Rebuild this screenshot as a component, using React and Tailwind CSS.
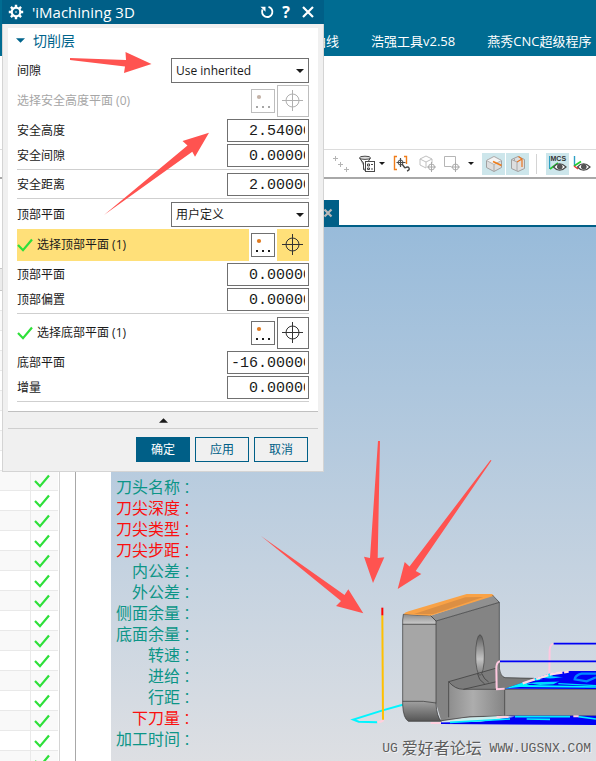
const rows = Array.from({ length: 24 }, (_, i) => i);

const readouts = [
  { label: "刀头名称" },
  { label: "刀尖深度", alert: true },
  { label: "刀尖类型", alert: true },
  { label: "刀尖步距", alert: true },
  { label: "内公差" },
  { label: "外公差" },
  { label: "侧面余量" },
  { label: "底面余量" },
  { label: "转速" },
  { label: "进给" },
  { label: "行距" },
  { label: "下刀量", alert: true },
  { label: "加工时间" },
];

const CheckMark = () => (
  <svg viewBox="0 0 16 14" className="w-4 h-3.5 shrink-0" fill="none" stroke="#2ee03a" strokeWidth="2.2">
    <path d="M1 7 L6 12.2 L15 1.5" />
  </svg>
);

const Caret = ({ className }) => (
  <svg viewBox="0 0 8 4" className={className} fill="currentColor">
    <path d="M0 0 H8 L4 4 Z" />
  </svg>
);

const Separator = () => <hr className="border-0 h-px mb-px bg-[#cfcfcf]" />;

const SelectRow = ({ id, label, options }) => (
  <div className="flex items-center justify-between h-[25px]">
    <label htmlFor={id}>{label}</label>
    <div className="relative w-[138px] h-full">
      <select id={id} className="appearance-none w-full h-full pl-1 pr-5 border border-[#707070] bg-white">
        {options.map((option) => (
          <option key={option}>{option}</option>
        ))}
      </select>
      <Caret className="absolute right-[5px] top-[11px] w-2 h-1 pointer-events-none" />
    </div>
  </div>
);

// The field is narrower than its nine characters, so the last digit is cut off
const NumberRow = ({ id, label, value }) => (
  <div className="flex items-center justify-between h-[23px]">
    <label htmlFor={id}>{label}</label>
    <input
      id={id}
      type="text"
      defaultValue={value.padStart(9)}
      className="w-[82px] h-full pt-px pl-[3px] pr-[3px] border border-[#707070] bg-white font-['Liberation_Mono',monospace] text-[15px]"
    />
  </div>
);

const PlaneRow = ({ label, active, disabled, checked }) => (
  <div className={`flex items-center h-8 ${disabled ? "text-[#a6a6a6]" : ""}`}>
    <div className={`flex items-center gap-1 flex-1 h-full ${active ? "bg-[#ffe079]" : ""}`}>
      {checked && <CheckMark />}
      <span>{label}</span>
    </div>
    <button
      aria-label="点对话框"
      disabled={disabled}
      className={`ml-[2px] mr-[2px] w-6 h-6 border bg-white ${disabled ? "border-[#bdbdbd]" : "border-[#707070]"}`}
    >
      <svg viewBox="0 0 22 22" className="w-full h-full" fill="currentColor">
        <circle cx="7" cy="7" r="2.1" fill={disabled ? "#c4b3a8" : "#e07a1f"} />
        <path d="M4 16h2v2H4zM10 16h2v2h-2zM16 16h2v2h-2z" />
      </svg>
    </button>
    <button
      aria-label="指定平面"
      disabled={disabled}
      className={`w-8 h-8 border ${
        active ? "bg-[#ffe079] border-[#ffe079]" : disabled ? "bg-white border-[#bdbdbd]" : "bg-white border-[#707070]"
      }`}
    >
      <svg viewBox="0 0 30 30" className="w-full h-full" fill="none" stroke={disabled ? "#b0b0b0" : "#333"}>
        <circle cx="14.5" cy="14.5" r="6.5" />
        <path d="M14.5 4 V25 M4 14.5 H25" />
      </svg>
    </button>
  </div>
);

const Dialog = () => (
  <section className="absolute left-[2px] top-0 w-[322px] border border-t-0 border-[#d4d4d4] bg-[#f0f0f0] text-[12px] text-[#1a1a1a]">
    <header className="flex items-center h-6 pl-[6px] pr-[10px] -mx-px bg-[#005f87] text-white">
      <svg viewBox="0 0 16 16" className="w-4 h-4 mr-2" fill="none" stroke="currentColor">
        <circle cx="8" cy="8" r="4.3" strokeWidth="2.2" />
        <path
          d="M8 .8v2.4M8 12.8v2.4M.8 8h2.4M12.8 8h2.4M2.9 2.9l1.7 1.7M11.4 11.4l1.7 1.7M2.9 13.1l1.7-1.7M11.4 4.6l1.7-1.7"
          strokeWidth="2.4"
        />
        <circle cx="8" cy="8" r=".8" fill="currentColor" stroke="none" />
      </svg>
      <h1 className="flex-1 text-[15px]">'iMachining 3D</h1>
      <button aria-label="重置" className="mr-[8px]">
        <svg viewBox="0 0 14 14" className="w-3.5 h-3.5" fill="none" stroke="currentColor" strokeWidth="1.9">
          <path d="M8.5 1.8 A5.2 5.2 0 1 1 2.6 4.5" />
          <path d="M.5 1.8 H5.5 V6.8 Z" fill="currentColor" stroke="none" />
        </svg>
      </button>
      <button className="mr-3 text-[16px] font-bold">?</button>
      <button aria-label="关闭">
        <svg viewBox="0 0 12 12" className="w-3 h-3" stroke="currentColor" strokeWidth="2.2">
          <path d="M1 1 L11 11 M11 1 L1 11" />
        </svg>
      </button>
    </header>

    <div className="mx-[5px] mt-1 pl-[9px] pr-[9px] pb-2 flex flex-col gap-[2px] bg-white border-b border-[#c0c0c0]">
      <button className="flex items-center gap-2 h-7 pb-1 -ml-px text-[14px] text-[#00648c]">
        <Caret className="w-[9px] h-[5px]" />
        切削层
      </button>
      <SelectRow id="clearance" label="间隙" options={["Use inherited"]} />
      <PlaneRow label="选择安全高度平面 (0)" disabled />
      <NumberRow id="safe-height" label="安全高度" value="2.54000" />
      <NumberRow id="safe-gap" label="安全间隙" value="0.00000" />
      <Separator />
      <NumberRow id="safe-distance" label="安全距离" value="2.00000" />
      <Separator />
      <SelectRow id="top-mode" label="顶部平面" options={["用户定义"]} />
      <PlaneRow label="选择顶部平面 (1)" active checked />
      <NumberRow id="top-plane" label="顶部平面" value="0.00000" />
      <NumberRow id="top-offset" label="顶部偏置" value="0.00000" />
      <Separator />
      <PlaneRow label="选择底部平面 (1)" checked />
      <NumberRow id="bottom-plane" label="底部平面" value="-16.00000" />
      <NumberRow id="increment" label="增量" value="0.00000" />
      <Separator />
    </div>

    <div className="mx-[5px] flex h-[17px] items-center justify-center border-b border-[#cfcfcf]">
      <button aria-label="折叠">
        <Caret className="w-[9px] h-[5px] rotate-180" />
      </button>
    </div>
    <footer className="flex justify-end gap-[5px] pt-2 pb-[9px] pr-[15px]">
      <button className="w-[54px] h-[25px] border border-[#005f87] bg-[#005f87] text-white">确定</button>
      <button className="w-[54px] h-[25px] border border-[#005f87] text-[#005f87]">应用</button>
      <button className="w-[54px] h-[25px] border border-[#005f87] text-[#005f87]">取消</button>
    </footer>
  </section>
);

const ToolButton = ({ label, lit, children }) => (
  <button
    aria-label={label}
    className={`flex items-center justify-center h-[22px] shrink-0 ${lit ? "w-[23px] bg-[#cde6eb]" : "w-[18px]"}`}
  >
    <svg viewBox="0 0 18 18" className="w-[18px] h-[18px] shrink-0" fill="none" stroke="#4a4a4a">
      {children}
    </svg>
  </button>
);

const Toolbar = () => (
  <div className="flex items-center h-[30px] pl-[332px] border-t border-b-2 border-t-[#dcdcdc] border-b-[#a8a8a8] text-[#1a1a1a]">
    <ToolButton label="点集">
      <path d="M1 3.5h5M3.5 1v5M6 9.5h5M8.5 7v5M12 14.5h5M14.5 12v5" stroke="#b5b5b5" />
    </ToolButton>
    <div className="flex items-center gap-[3px] ml-2">
      <ToolButton label="过滤器">
        <ellipse cx="7" cy="2.8" rx="5.5" ry="1.6" fill="#ddd" />
        <path d="M1.5 3 L5.5 8 V14.5 L7.5 15.5" fill="#999" />
        <path d="M12.5 3 L10.5 6" />
        <rect x="7.5" y="6.5" width="9" height="10" fill="#fff" />
        <path d="M9.5 9h2v2h-2zM13 9.5h2M9.5 13h2v1.5h-2zM13 14h2" />
      </ToolButton>
      <Caret className="w-[6px] h-[3px]" />
    </div>
    <div className="flex items-center gap-2 ml-2">
      <ToolButton label="捕捉点">
        <path d="M4 1.5 H1.5 V14.5 H4 M11 1.5 H13.5 V9" stroke="#f07d1a" strokeWidth="1.4" />
        <path d="M7.5 3v9M3.5 7.5h9" strokeWidth="1.2" />
        <circle cx="7.5" cy="7.5" r="2.5" />
        <path d="M9 9 L12 13 M12 13 Q15 11 16 13 Q17 15 14 16" strokeWidth="1.4" />
      </ToolButton>
      <ToolButton label="体定向">
        <path d="M1 4 L7 1 L13 4 V8 M1 4 V10 L7 13 V7 L13 4 M1 4 L7 7" stroke="#c0c0c0" />
        <circle cx="12.5" cy="12" r="3" stroke="#aaa" />
        <path d="M12.5 7v10M8 12h9" stroke="#aaa" />
      </ToolButton>
    </div>
    <div className="flex items-center gap-[6px] ml-[7px] mr-2">
      <ToolButton label="面定向">
        <path d="M7 11.5 H.5 V1.5 H11.5 V7" stroke="#b5b5b5" />
        <circle cx="11.5" cy="12" r="3" stroke="#aaa" />
        <path d="M11.5 7v10M7 12h9" stroke="#aaa" />
      </ToolButton>
      <Caret className="w-[6px] h-[3px]" />
    </div>
    <div className="flex items-center gap-px">
      <ToolButton label="剖切面" lit>
        <path d="M1.5 5.5 L9 1.5 L16.5 5.5 V12.5 L9 16.5 L1.5 12.5 Z" fill="#dedede" stroke="#a0a0a0" />
        <path d="M1.5 5.5 L9 9.5 L16.5 5.5 L9 1.5Z" fill="#f4f4f4" stroke="#b5b5b5" />
        <path d="M9 9.5 V16" stroke="#a8a8a8" />
        <path d="M8 6.5 L16.5 10.5" stroke="#f07d1a" strokeWidth="1.6" />
      </ToolButton>
      <ToolButton label="剖切体" lit>
        <path d="M2.5 4.5 L9 1.5 L15.5 4.5 V13.5 L9 16.5 L2.5 13.5 Z" fill="#dedede" stroke="#a0a0a0" />
        <path d="M2.5 4.5 L8 7 V16 M5.5 3.5 V6" stroke="#a8a8a8" />
        <path d="M9.5 1.5 L13 4 V12 M13 4 L8 7" stroke="#e87722" strokeWidth="1.2" />
      </ToolButton>
    </div>
    <div className="w-px h-5 ml-[7px] mr-[9px] bg-[#d4d4d4]" />
    <ToolButton label="MCS 显示" lit>
      <path d="M.5 1 V14" stroke="#2d9fc4" strokeWidth="1.4" />
      <path d="M1 14 L9 8" stroke="#25c92d" strokeWidth="1.6" />
      <text x="1.5" y="6" fontSize="7" fontWeight="700" fill="#333" stroke="none" fontFamily="Liberation Sans, sans-serif">
        MCS
      </text>
      <path d="M4.5 12 Q10.5 5.5 17 12 Q10.5 18.5 4.5 12Z" fill="#fff" strokeWidth="1.2" />
      <circle cx="10.8" cy="11.8" r="2.4" fill="#555" />
    </ToolButton>
    <div className="ml-1">
      <ToolButton label="坐标显示">
        <path d="M1.5 1 V11" stroke="#2d9fc4" strokeWidth="1.4" />
        <path d="M1 11 L8 6.5" stroke="#25c92d" strokeWidth="1.6" />
        <path d="M1 11 L5 14" stroke="#e33" strokeWidth="1.4" />
        <path d="M4.5 12 Q10.5 5.5 17 12 Q10.5 18.5 4.5 12Z" fill="#fff" strokeWidth="1.2" />
        <circle cx="10.8" cy="11.8" r="2.4" fill="#555" />
      </ToolButton>
    </div>
  </div>
);

const OperationList = () => (
  <aside className="flex w-[111px] shrink-0 overflow-hidden">
    <div className="w-[60px] pt-[89px] border-r border-[#d4d4d4]">
      <table className="w-[58px] table-fixed border-collapse">
        <thead>
          <tr className="h-[22px] bg-[#ececec] border-y border-[#c8c8c8]">
            <th className="w-[30px]" />
            <th className="w-7" />
          </tr>
        </thead>
        <tbody>
          {rows.map((row) => (
            <tr key={row} className="h-5 border-b border-[#e9e9e9] even:bg-[#f9f9f9]">
              <td className="border-r border-[#e9e9e9]" />
              <td className="pl-[3px]">
                <CheckMark />
              </td>
            </tr>
          ))}
        </tbody>
      </table>
    </div>
    <div className="w-4 border-r border-[#a8a8a8]" />
  </aside>
);

// Drawn at three units per pixel
const Part = () => (
  <svg viewBox="0 0 768 573" className="absolute left-[229px] top-[343px] w-64 h-[191px]" fill="none">
    <defs>
      <linearGradient id="front" x1="0" y1="0" x2="0" y2="1">
        <stop offset="0" stopColor="#8c8c8c" />
        <stop offset=".08" stopColor="#c4c4c4" />
        <stop offset=".1" stopColor="#a6a6a6" />
        <stop offset=".8" stopColor="#a6a6a6" />
        <stop offset="1" stopColor="#555" />
      </linearGradient>
      <linearGradient id="fillet" x1="0" y1="0" x2="1" y2="0">
        <stop offset="0" stopColor="#848484" />
        <stop offset=".5" stopColor="#adadad" />
        <stop offset="1" stopColor="#858585" />
      </linearGradient>
      <linearGradient id="hole" x1="0" y1="0" x2="0" y2="1">
        <stop offset="0" stopColor="#5c5c5c" />
        <stop offset=".6" stopColor="#c4c4c4" />
        <stop offset="1" stopColor="#777" />
      </linearGradient>
    </defs>

    <path d="M188 404 L128 421 L40 449 L56 455 L112 457" stroke="#00f5ff" strokeWidth="6" />
    <path d="M112 457 L124 454 L131 450" stroke="#ffd0dc" strokeWidth="7" />
    <path d="M127 136 L129 449" stroke="#ffc000" strokeWidth="6" />
    <path d="M127 113 V136" stroke="#f00" strokeWidth="6" />

    <path d="M288 153 L478 97 V300 Q482 320 495 323 L582 325 L494 358 V440 L326 444 L304 454 L288 400 Z" fill="#848484" />
    <path d="M326 335 L470 294 Q482 320 495 323 L582 325 L494 358 L370 358 Q345 358 326 335Z" fill="#7b7b7b" />
    <path d="M326 335 Q345 358 370 358 H494 V438 L390 440 L304 453 L326 440Z" fill="url(#fillet)" />
    <path d="M494 358 H768 V438 H494Z" fill="#989898" />
    <path d="M190 133 L272 137 L288 153 V400 Q290 440 304 454 H205 Q190 445 188 405 V150Z" fill="url(#front)" stroke="#333" strokeWidth="2" />
    <path d="M272 137 L456 76 L478 97 L288 153Z" fill="#909090" />
    <path d="M191 133 Q194 127 206 124 L380 72 H456 L462 77 L272 137Z" fill="#f9a246" />
    <path d="M222 132 L376 82 L430 81 L280 132Z" fill="#dc8f43" />
    <ellipse cx="420" cy="255" rx="13" ry="61" fill="url(#hole)" stroke="#444" strokeWidth="2" />
    <g stroke="#333" strokeWidth="2">
      <path d="M188 163 H288 M188 394 L250 394 L288 399 M272 137 L288 153 L478 97 L458 76 M478 97 V295 Q482 320 495 323 L582 325" />
      <path d="M326 335 L470 294 M326 335 V442 M326 335 Q345 358 370 358 H494 M370 358 L470 335 M494 358 V438 H768 M494 358 H768" />
      <path d="M413 312 Q415 330 434 342 M426 312 Q432 328 446 336 M304 452 L390 440 L494 438" />
    </g>

    <path d="M494 356 L632 310 L690 303 H768 V357 Z" fill="#0000f5" />
    <path d="M494 356 L632 310 L665 306 L560 345 L768 349 V353 L540 351Z" fill="#00f5ff" />
    <path d="M565 340 L630 318 L670 322 L655 335 L640 343 L600 345Z" fill="#00d9ff" />
    <path d="M655 341 L768 347" stroke="#00d9ff" strokeWidth="4" />
    <path d="M560 338 L700 320 M575 334 L768 330 M600 326 L768 338" stroke="#0000f5" strokeWidth="5" />
    <path d="M768 311 H725 Q705 316 704 328 L740 334 L768 322" stroke="#0088ff" strokeWidth="7" />
    <path d="M548 340 L635 312 L686 305" stroke="#ffd8e4" strokeWidth="7" strokeDasharray="38 5" />
    <path d="M628 310 L629 240 Q630 224 640 221 M470 355 L469 292 Q470 276 480 274 M468 358 L494 356" stroke="#ffc8e0" strokeWidth="6" />
    <path d="M480 274 H768 M641 221 H768" stroke="#0000f5" strokeWidth="5" />

    <path d="M303 457 L400 456 L510 437 H768 V465 L303 462Z" fill="#0000f5" />
    <path d="M303 457 L380 444 L494 437 L525 440 L420 455Z" fill="#c8eeee" />
    <path d="M330 457 L510 447 M525 440 H690 M715 440 L768 447 M560 447 L630 448" stroke="#00eaff" strokeWidth="5" />
    <path d="M272 459 H303 M470 441 H505 M700 439 H716" stroke="#ffd0e0" strokeWidth="6" />
  </svg>
);

const Viewport = () => (
  <main className="flex flex-col flex-1 min-w-0">
    <div className="flex items-end h-12 border-b-2 border-[#005f87]">
      <div className="flex items-center justify-end w-[228px] h-[25px] pr-[6px] bg-[#005f87]">
        <button aria-label="关闭标签">
          <svg viewBox="0 0 10 10" className="w-[10px] h-[10px]" stroke="#b8b8b8" strokeWidth="2.2">
            <path d="M1.5 1.5 L8.5 8.5 M8.5 1.5 L1.5 8.5" />
          </svg>
        </button>
      </div>
    </div>
    <div className="relative flex-1 pt-[250px] pl-[5px] overflow-hidden bg-linear-to-b from-[#98bbda] to-[#dddfe3]">
      <Part />
      <ul className="w-[78px] text-[16px] leading-[21px] whitespace-nowrap">
        {readouts.map(({ label, alert }) => (
          <li key={label} className={`flex justify-end h-[21px] ${alert ? "text-[#fa0f0f]" : "text-[#0c9587]"}`}>
            {label}
            <span className="font-['Noto_Sans_CJK_TC',sans-serif] text-[14px]">：</span>
          </li>
        ))}
      </ul>
      <p className="absolute right-[5px] bottom-[2px] flex items-center text-[16px] leading-[21px] whitespace-pre text-[#5c5c5c] [text-shadow:1px_1px_0_#f4f4f4]">
        <span className="pr-1 font-['Liberation_Mono',monospace] text-[13px]">UG</span>
        爱好者论坛
        <span className="font-['Liberation_Mono',monospace] text-[13px]"> WWW.UGSNX.COM</span>
      </p>
    </div>
  </main>
);

const Arrows = () => (
  <svg viewBox="0 0 596 761" className="absolute left-0 top-0 w-[596px] h-[761px] pointer-events-none" fill="#ff5350">
    <path d="M70 58 L126 60 L125.5 52 L151.5 64 L124 73 L125 66.5 L70 60Z" />
    <path d="M104 215 L187.5 145.5 L182.5 141 L209 132.7 L195 156.7 L192.3 151.7Z" />
    <path d="M261 536 L344.5 595 L348.3 589.3 L363.3 613.3 L336 606 L341 601Z" />
    <path d="M378 441 H380 L377.7 558 L384.3 557.3 L373 583 L364 556.7 L370 558Z" />
    <path d="M490.5 460 L491.5 460.5 L415.7 571 L421.3 574 L397.7 589 L404.7 562 L409.5 566.5Z" />
  </svg>
);

export default function App() {
  return (
    <div className="relative flex flex-col h-screen overflow-hidden bg-white font-['Open_Sans','Noto_Sans_CJK_SC',sans-serif]">
      <nav className="flex items-end gap-8 h-14 shrink-0 pl-[313px] pb-[5px] bg-[#006c92] text-[13px] leading-5 text-white whitespace-nowrap">
        <a href="#curve">曲线</a>
        <a href="#haoqiang">浩强工具v2.58</a>
        <a href="#yanxiu">燕秀CNC超级程序</a>
      </nav>
      <div className="h-[93px] shrink-0" />
      <Toolbar />
      <div className="flex flex-1 min-h-0">
        <OperationList />
        <Viewport />
      </div>
      <Dialog />
      <Arrows />
    </div>
  );
}
